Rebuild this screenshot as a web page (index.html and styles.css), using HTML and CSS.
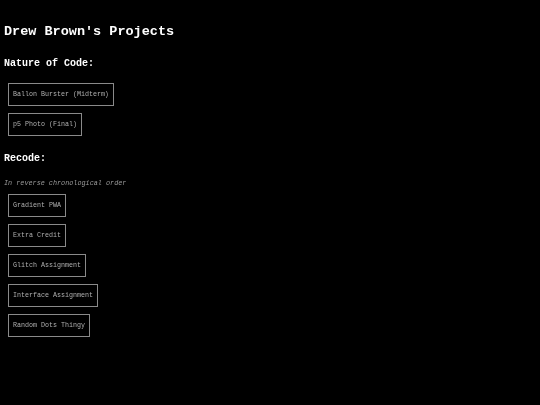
FILE: index.html
```html
<!DOCTYPE html>
<html>
<head>
<meta charset="utf-8">
<link rel="stylesheet" href="styles.css">
</head>
<body>
<div class="page">
  <h1 class="title">Drew Brown's Projects</h1>
  <h2 class="section">Nature of Code:</h2>
  <div class="list">
    <a class="btn">Ballon Burster (Midterm)</a>
    <a class="btn">p5 Photo (Final)</a>
  </div>
  <h2 class="section recode">Recode:</h2>
  <p class="note">In reverse chronological order</p>
  <div class="list">
    <a class="btn">Gradient PWA</a>
    <a class="btn">Extra Credit</a>
    <a class="btn">Glitch Assignment</a>
    <a class="btn">Interface Assignment</a>
    <a class="btn">Random Dots Thingy</a>
  </div>
</div>
</body>
</html>
```
FILE: styles.css
```css
html, body {
  margin: 0;
  padding: 0;
  background: #000;
  height: 100%;
}
.page {
  padding: 0 4px;
  font-family: "Liberation Mono", "Courier New", monospace;
  color: #fff;
  display: flex;
  flex-direction: column;
  align-items: flex-start;
  -webkit-font-smoothing: antialiased;
}
.title {
  font-size: 13.5px;
  line-height: 16px;
  font-weight: bold;
  margin: 24px 0 0 0;
  filter: grayscale(1);
}
.section {
  font-size: 10px;
  line-height: 12px;
  font-weight: bold;
  margin: 18px 0 0 0;
  filter: grayscale(1);
}
.section.recode {
  margin-top: 17px;
}
.note {
  font-size: 6.8px;
  line-height: 9px;
  font-style: italic;
  color: #9a9a9a;
  margin: 14px 0 0 0;
  filter: grayscale(1);
}
.list {
  display: flex;
  flex-direction: column;
  align-items: flex-start;
  gap: 7px;
  margin: 13px 0 0 4px;
}
.note + .list {
  margin-top: 6px;
}
.btn {
  display: block;
  border: 1px solid #8a8a8a;
  padding: 6px 4px;
  font-size: 6.67px;
  line-height: 9px;
  color: #b0b0b0;
  white-space: nowrap;
  filter: grayscale(1);
}
```
